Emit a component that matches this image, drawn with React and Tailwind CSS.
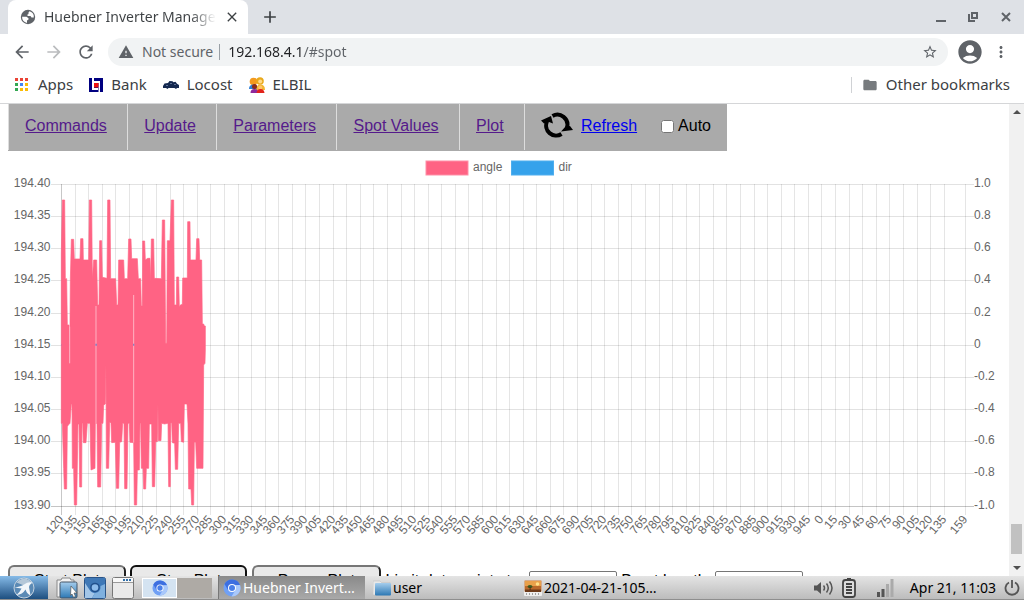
import React, { useState } from "react";
import {
  MdAccountCircle,
  MdAdd,
  MdArrowBack,
  MdArrowForward,
  MdClose,
  MdFolder,
  MdMoreVert,
  MdRefresh,
  MdStarBorder,
  MdWarning,
} from "react-icons/md";

const navLinks = ["Commands", "Update", "Parameters", "Spot Values", "Plot"];

// x axis labels: 120..945, then the counter wraps to 0..135, last sample is 159
const xLabels = [
  ...Array.from({ length: 56 }, (_, i) => 120 + i * 15),
  ...Array.from({ length: 10 }, (_, i) => i * 15),
];
const xTicks = [
  ...xLabels.map((label, i) => ({ label, x: Math.round(61 + i * 13.58) })),
  { label: 159, x: 965 },
];

const yTicks = [
  { y: 184, left: "194.40", right: "1.0" },
  { y: 216, left: "194.35", right: "0.8" },
  { y: 248, left: "194.30", right: "0.6" },
  { y: 280, left: "194.25", right: "0.4" },
  { y: 313, left: "194.20", right: "0.2" },
  { y: 345, left: "194.15", right: "0" },
  { y: 377, left: "194.10", right: "-0.2" },
  { y: 409, left: "194.05", right: "-0.4" },
  { y: 441, left: "194.00", right: "-0.6" },
  { y: 473, left: "193.95", right: "-0.8" },
  { y: 506, left: "193.90", right: "-1.0" },
];

// upper and lower envelope of the angle signal, in thirds of a pixel
const upper =
  "184,250 187,90 194,90 196,326 200,326 202,465 207,465 209,580 211,330 214,208 221,208 223,267 240,267 242,206 249,206 250,270 266,270 268,90 275,90 277,326 281,270 290,270 293,405 297,405 299,212 305,212 307,322 321,325 323,90 330,90 332,326 347,326 350,405 354,405 356,270 371,270 373,326 383,326 386,207 393,207 395,266 412,266 415,326 422,326 424,408 427,408 428,213 434,213 436,270 443,265 450,265 452,335 454,207 461,207 463,325 484,326 487,150 494,150 497,520 500,520 502,212 510,212 514,90 521,90 523,405 529,405 530,321 536,321 538,412 541,405 547,403 548,324 562,324 563,155 570,155 571,270 588,270 590,206 597,206 599,270 605,270 607,462 611,462 613,468 616,468";
const lower =
  "616,540 615,580 611,585 609,895 590,895 587,817 583,817 581,1005 575,1005 573,957 566,957 564,762 561,702 553,702 551,817 544,815 542,760 536,760 533,898 526,898 524,820 517,818 515,758 512,760 511,950 506,950 504,760 494,762 485,760 483,812 475,812 474,702 472,815 467,815 464,950 457,950 455,762 448,762 446,895 439,895 437,957 431,957 429,895 424,895 422,760 420,760 418,900 412,900 410,1005 403,1005 401,818 390,817 388,760 384,760 381,956 374,956 372,760 368,760 365,815 359,817 356,955 349,955 346,817 335,818 333,760 329,756 326,895 319,895 318,585 316,702 311,705 309,760 305,760 302,951 293,951 291,760 286,760 285,895 273,900 270,760 262,760 258,818 250,818 248,760 246,760 245,951 239,951 237,762 234,762 230,1005 223,1005 221,895 217,895 216,702 214,702 210,760 205,765 202,770 200,957 193,957 191,895 187,760 184,760";

const Chart = () => (
  <svg
    viewBox="8 151 993 414"
    className="block w-full"
    fontFamily="Liberation Sans, Arial, sans-serif"
    fontSize="12"
    fill="#666"
  >
    <rect x="426" y="161" width="42" height="14" fill="#ff6384" stroke="#ff8fa7" />
    <text x="473" y="171">
      angle
    </text>
    <rect x="511.5" y="161" width="42" height="14" fill="#36a2eb" stroke="#4faeee" />
    <text x="558.5" y="171">
      dir
    </text>
    {yTicks.map((t) => (
      <g key={t.y}>
        <rect
          x="51"
          y={t.y}
          width="923"
          height="1"
          fill={t.y === 506 ? "#c4c4c4" : "#e2e2e2"}
        />
        <text x="50.5" y={t.y + 3} textAnchor="end">
          {t.left}
        </text>
        <text x="974" y={t.y + 3}>
          {t.right}
        </text>
      </g>
    ))}
    {xTicks.map((t, i) => (
      <g key={i}>
        <rect
          x={t.x}
          y="184"
          width="1"
          height="331"
          fill="#000"
          fillOpacity={i === 0 ? 0.22 : 0.1}
        />
        <text
          transform={`translate(${t.x} 517) rotate(-50)`}
          textAnchor="end"
          y="4"
        >
          {t.label}
        </text>
      </g>
    ))}
    <rect x="61" y="344" width="143" height="2" fill="#36a2eb" />
    <g transform="translate(0 170) scale(0.33333)">
      <polygon
        points={`${upper} ${lower}`}
        fill="#ff6384"
        stroke="#ff6384"
        strokeWidth="2"
        strokeLinejoin="round"
      />
      <path d="M288 408V760M401 375V818M209 470V580" stroke="#ffb3c3" strokeWidth="3" />
      <path d="M286 524h5M399 524h4" stroke="#8b7fc0" strokeWidth="6" />
    </g>
  </svg>
);

const GlobeIcon = () => (
  <svg viewBox="0 0 16 16" className="size-4 shrink-0">
    <circle cx="8" cy="8" r="7.2" fill="#5f6368" />
    <path
      d="M9.500 2.200A6 6 0 0 1 13.800 8.500H11.500L10.500 7H8L7 6l1.500-1V3.500z"
      fill="#fff"
    />
    <path d="M2.100 7.800H6.500l2 1.500v1.200L7 11.500v2.400A6 6 0 0 1 2.100 7.800z" fill="#fff" />
  </svg>
);

const AppsIcon = () => (
  <svg viewBox="0 0 13 13" className="h-[13px] w-[13px]">
    {["#ea4335", "#ea4335", "#ea4335", "#34a853", "#4285f4", "#fbbc05", "#34a853", "#fbbc05", "#fbbc05"].map(
      (color, i) => (
        <rect
          key={i}
          x={(i % 3) * 5}
          y={Math.floor(i / 3) * 5}
          width="3"
          height="3"
          fill={color}
        />
      )
    )}
  </svg>
);

const BankIcon = () => (
  <svg viewBox="0 0 14 14" className="h-[14px] w-[14px]">
    <path d="M0 0h14v14H0z" fill="#000080" />
    <path d="M3 0h2v10h4v2H3zM5 3h6v11H9.500V5H5z" fill="#fff" />
    <path d="M5 5h4.500v4.500H5z" fill="#e11" />
  </svg>
);

const LocostIcon = () => (
  <svg viewBox="0 0 16 16" className="size-4">
    <path
      d="M0 9 1.500 6.500 5 6l1.500-2 3 .2 1 1 2-.500 1.500 2L16 8v3h-2l-1 1-1.500-1H5.500l-1 1L3 11H0z"
      fill="#14284f"
    />
    <path d="M3 8.500h2M7 6.500h2M11 7.500h2" stroke="#8fa3c8" strokeWidth=".6" />
  </svg>
);

const ElbilIcon = () => (
  <svg viewBox="0 0 16 16" className="size-4">
    <circle cx="4.500" cy="4.500" r="3.800" fill="#f39a1e" />
    <path d="M0 12q0-4.500 4.500-4.500t4 4.500z" fill="#2f7fd6" />
    <circle cx="11" cy="4" r="3.800" fill="#e9a91c" />
    <circle cx="11.200" cy="4.600" r="2" fill="#ffd98a" />
    <path d="M7 13q0-5.500 4.500-5.500T16 13z" fill="#f2b632" />
    <circle cx="5.500" cy="9.500" r="2.500" fill="#8b2b1a" />
    <path d="M1.500 16q0-4 4-4t4 4z" fill="#8e2a9c" />
    <circle cx="11.300" cy="10.500" r="2" fill="#ffc46b" />
    <path d="M7.500 16q.500-4 4-4t4 4z" fill="#e2231a" />
  </svg>
);

const RefreshArrows = () => (
  <svg viewBox="0 0 32 26" className="h-[26px] w-8">
    <path
      d="M11.500 4A10 10 0 0 1 26 15.500M20.500 22A10 10 0 0 1 6 9.500"
      fill="none"
      stroke="#000"
      strokeWidth="4"
    />
    <path d="m20 19.500 12-1.500-3-4-4.500.500zM0 8.500l10-4.500 2 7.500-4-1.500-5 1.500z" fill="#000" />
  </svg>
);

const ChromiumIcon = () => (
  <svg viewBox="0 0 18 18" className="h-full w-full">
    <circle cx="9" cy="9" r="8.500" fill="#6fa0f5" />
    <path d="M1.500 5A8.500 8.500 0 0 1 17 6H9L5 11z" fill="#3d6fe0" />
    <path d="M17 6a8.500 8.500 0 0 1-8.500 11.500L12.500 11 12 6z" fill="#a9c8fb" />
    <circle cx="9" cy="9" r="4" fill="#fff" />
    <circle cx="9" cy="9" r="3" fill="#4a7fe8" />
  </svg>
);

const FolderIcon = () => (
  <svg viewBox="0 0 18 16" className="h-4 w-[18px]">
    <path d="M0 1h7l1.500 1.500H17V15H0z" fill="#e8e8e8" stroke="#bbb" strokeWidth=".5" />
    <rect x="2" y="3" width="16" height="12.500" rx="1" fill="url(#folderBlue)" />
  </svg>
);

const PhotoIcon = () => (
  <svg viewBox="0 0 18 16" className="h-4 w-[18px]">
    <rect width="18" height="16" rx="1" fill="#eee" />
    <rect x=".5" y=".5" width="17" height="11" fill="#b9682a" />
    <path d="M1 1h16v5H1z" fill="#e9a04a" />
    <circle cx="13.500" cy="4" r="1.800" fill="#ffe08a" />
    <path d="M1 9.500h16V12H1z" fill="#6d3a1a" />
    <ellipse cx="6" cy="6.500" rx="2.500" ry="1.500" fill="#3b5a20" />
    <path d="M5.700 7h.8v3h-.8z" fill="#3a2412" />
    <path d="M2 14h14" stroke="#888" strokeDasharray="1 2" strokeWidth="1.500" />
  </svg>
);

const Browser = () => (
  <header className="shrink-0 font-['Noto_Sans',sans-serif] text-[#3c4043]">
    <div className="flex h-[34px] items-center bg-[#dee1e6] pl-2">
      <div className="flex h-full w-60 items-center gap-2 rounded-t-lg bg-white pr-2 pl-3">
        <GlobeIcon />
        <span className="flex-1 overflow-hidden bg-[linear-gradient(90deg,#3c4043_85%,transparent)] bg-clip-text text-sm whitespace-nowrap text-transparent">
          Huebner Inverter Management
        </span>
        <button aria-label="Close tab" className="p-0">
          <MdClose className="size-4" />
        </button>
      </div>
      <button aria-label="New tab" className="ml-3">
        <MdAdd className="size-5" />
      </button>
      <div className="ml-auto flex items-center gap-5 pr-3 text-[#5f6368]">
        <button aria-label="Minimize">
          <svg viewBox="0 0 12 12" className="size-3">
            <path d="M0 9h10v2H0z" fill="currentColor" />
          </svg>
        </button>
        <button aria-label="Restore">
          <svg viewBox="0 0 12 12" className="size-3" fill="none" stroke="currentColor" strokeWidth="2">
            <path d="M4 2h5v5H4zM1 3v7h6" />
          </svg>
        </button>
        <button aria-label="Close window">
          <svg viewBox="0 0 12 12" className="size-3" stroke="currentColor" strokeWidth="2">
            <path d="m2 2 8 8M10 2l-8 8" />
          </svg>
        </button>
      </div>
    </div>
    <div className="flex h-9 items-center bg-white pr-3.5 pl-3 text-[#5f6368]">
      <button aria-label="Back" className="mr-3">
        <MdArrowBack className="size-5" />
      </button>
      <button aria-label="Forward" className="mr-3 text-[#babcbe]">
        <MdArrowForward className="size-5" />
      </button>
      <button aria-label="Reload" className="mr-3">
        <MdRefresh className="size-5" />
      </button>
      <div className="flex h-7 flex-1 items-center rounded-full bg-[#f1f3f4] px-2.5 text-sm">
        <MdWarning className="size-4" />
        <span className="ml-2">Not secure</span>
        <span className="mr-2 ml-1.5 h-4 w-px bg-[#9aa0a6]" />
        <input
          aria-label="Address"
          defaultValue="192.168.4.1/#spot"
          className="flex-1 bg-[linear-gradient(90deg,#202124_74px,#5f6368_74px)] bg-clip-text text-transparent outline-none"
        />
        <button aria-label="Bookmark this page">
          <MdStarBorder className="size-4" />
        </button>
      </div>
      <button aria-label="Profile" className="ml-2">
        <MdAccountCircle className="size-7" />
      </button>
      <button aria-label="Menu" className="ml-2">
        <MdMoreVert className="size-[18px]" />
      </button>
    </div>
    <nav className="flex h-[34px] items-center gap-4 border-b border-[#d5d6d8] bg-white pr-3.5 pb-1 pl-[15px] text-[15px]">
      <a href="#apps" className="flex items-center gap-2.5">
        <AppsIcon />
        Apps
      </a>
      <a href="#bank" className="flex items-center gap-2">
        <BankIcon />
        Bank
      </a>
      <a href="#locost" className="flex items-center gap-2">
        <LocostIcon />
        Locost
      </a>
      <a href="#elbil" className="flex items-center gap-2">
        <ElbilIcon />
        ELBIL
      </a>
      <a href="#other" className="ml-auto flex items-center gap-2">
        <span className="mr-0.5 h-4 w-px bg-[#d0d2d5]" />
        <MdFolder className="size-4 text-[#777b7e]" />
        Other bookmarks
      </a>
    </nav>
  </header>
);

const Page = () => {
  const [auto, setAuto] = useState(false);

  return (
    <main className="flex min-h-0 flex-1 bg-white font-['Liberation_Sans',Arial,sans-serif] text-base text-black">
      <div className="min-w-0 flex-1 overflow-hidden px-2">
        <nav className="inline-flex h-[47px] bg-[#aaa] pb-px align-top">
          {navLinks.map((name) => (
            <div key={name} className="border-l border-[#ddd] px-4 pt-2.5">
              <a href="#spot" className="text-[#551a8b] underline">
                {name}
              </a>
              &nbsp;
            </div>
          ))}
          <div className="flex items-start border-l border-[#ddd] px-4">
            <span className="pt-2">
              <RefreshArrows />
            </span>
            <a href="#refresh" className="ml-2 pt-2.5 text-[#0000ee] underline">
              Refresh
            </a>
            <label className="ml-6 flex items-center gap-1 pt-2.5">
              <input
                type="checkbox"
                checked={auto}
                onChange={(e) => setAuto(e.target.checked)}
                className="size-[13px]"
              />
              Auto
            </label>
          </div>
        </nav>
        <Chart />
        <div className="leading-5 whitespace-nowrap">
          <button className="rounded-md border-2 border-[#767676] border-r-[#222] bg-[#e9e9e9] px-6 py-1">
            Start Plot
          </button>{" "}
          <button className="rounded-md border-2 border-[#101010] bg-[#e9e9e9] px-6 py-1">
            Stop Plot
          </button>{" "}
          <button className="rounded-md border-2 border-[#767676] border-r-[#222] bg-[#e9e9e9] px-6 py-1">
            Pause Plot
          </button>{" "}
          <label>
            Limit data points to:{" "}
            <input type="text" className="h-5 w-[88px] rounded-xs border border-[#767676] bg-white" />
          </label>{" "}
          <label>
            Burst length:{" "}
            <input type="text" className="h-5 w-[88px] rounded-xs border border-[#767676] bg-white" />
          </label>
        </div>
      </div>
      <div className="flex w-[15px] shrink-0 flex-col items-center bg-[#f1f1f1] py-1.5">
        <svg viewBox="0 0 8 4" className="h-1 w-2">
          <path d="M0 4 4 0l4 4z" fill="#505050" />
        </svg>
        <div className="mt-auto mb-3 h-[30px] w-[11px] bg-[#c1c1c1]" />
        <svg viewBox="0 0 8 4" className="h-1 w-2">
          <path d="M0 0h8L4 4z" fill="#505050" />
        </svg>
      </div>
    </main>
  );
};

const Taskbar = () => (
  <footer className="flex h-6 shrink-0 items-center border-b border-[#8e8e8e] bg-linear-to-b from-[#e4e4e4] to-[#bcbcbc] font-['Noto_Sans',sans-serif] text-sm text-black">
    <button
      aria-label="Start"
      className="flex h-full w-12 items-center justify-center bg-linear-to-b from-[#86bbe8] to-[#1d4f80]"
    >
      <svg viewBox="0 0 22 22" className="size-[22px]">
        <circle cx="11" cy="11" r="10" fill="#5b8ab5" stroke="#c3d2df" />
        <path d="M3.500 5.500A9.500 9.500 0 0 1 19 6L11 8.500z" fill="#b4c7d8" />
        <path
          d="M1.500 10.500Q8 9.500 11 7.500 15 4.500 19.500 5.500 16.500 7.500 16 10L17.500 18.500Q14 17 12.500 12.500 9.500 17.500 3.500 18 7 15 8.500 11.500z"
          fill="#f2f6fa"
        />
      </svg>
    </button>
    <div className="ml-2 flex gap-1.5">
      <button aria-label="File manager">
        <svg viewBox="0 0 22 22" className="size-[22px]">
          <defs>
            <linearGradient id="folderBlue" x1="0" y1="0" x2="0" y2="1">
              <stop offset="0" stopColor="#a5cdec" />
              <stop offset="1" stopColor="#2c78b4" />
            </linearGradient>
          </defs>
          <path d="M1 3h4l1-2h8l1 2h3v17H1z" fill="#f2f2f2" stroke="#888" />
          <rect x="4" y="5" width="17" height="16" rx="1.500" fill="url(#folderBlue)" stroke="#456" />
          <path d="m15 9 6 7h-3l1.500 3.500-2 .8L16 17l-1.500 1.500z" fill="#fff" stroke="#555" strokeWidth=".7" />
        </svg>
      </button>
      <button aria-label="Web browser">
        <svg viewBox="0 0 22 22" className="size-[22px]">
          <rect x=".5" y=".5" width="21" height="21" rx="2" fill="#3b77b8" stroke="#2a5488" />
          <path d="M1 1h20v5H11Q6 6 5 11L1 6z" fill="#3f78b6" />
          <path d="M1 6l4 6q2 4 6 4l-3 5H1z" fill="#a3c6e8" />
          <path d="M11 16q6-1 5.500-7L21 7v14H8z" fill="#7fb0de" />
          <circle cx="11" cy="10.500" r="4.800" fill="#21508c" />
          <circle cx="11" cy="10.500" r="3.300" fill="#8dbcec" />
        </svg>
      </button>
      <button aria-label="Show desktop">
        <svg viewBox="0 0 22 22" className="size-[22px]">
          <rect x=".5" y=".5" width="21" height="21" rx="2" fill="#eaeaea" stroke="#777" />
          <path d="M1 1h20v4H1z" fill="#f8f8f8" />
          <path d="M11 3h2M14 3h2M17 3h2" stroke="#2f6ea8" strokeWidth="2" />
          <path d="M1 5.500h20" stroke="#999" />
        </svg>
      </button>
    </div>
    <div className="ml-2 flex h-5">
      <button
        aria-label="Desktop 1"
        className="flex w-[35px] items-center justify-center border border-white bg-[#d4e3f1]"
      >
        <span className="size-4">
          <ChromiumIcon />
        </span>
      </button>
      <button aria-label="Desktop 2" className="w-[35px] bg-[#aeaaa5]" />
    </div>
    <div className="ml-1.5 flex h-full gap-1">
      <button className="flex w-[147px] items-center gap-0.5 border-l border-[#777] bg-linear-to-b from-[#8a8a8a] to-[#a9a9a9] pl-1 text-white">
        <span className="size-[18px] shrink-0">
          <ChromiumIcon />
        </span>
        Huebner Invert…
      </button>
      <button className="flex w-[147px] items-center gap-0.5 pl-1">
        <FolderIcon />
        user
      </button>
      <button className="flex w-[147px] items-center gap-0.5 pl-1">
        <PhotoIcon />
        2021-04-21-105…
      </button>
    </div>
    <div className="ml-auto flex items-center pr-1">
      <svg viewBox="0 0 20 16" className="h-4 w-5" fill="none" stroke="#555" strokeWidth="1.500">
        <path d="M0 5.500h3L7 2v12l-4-3.500H0z" fill="#555" stroke="none" />
        <path d="M9.500 5.500q2 2.500 0 5M12.500 3.500q3.500 4.500 0 9M15.500 1.500q5 6.500 0 13" />
      </svg>
      <svg viewBox="0 0 14 20" className="ml-2 h-5 w-3.5">
        <path d="M5 0h4v2H5z" fill="#444" />
        <rect x="1" y="2" width="12" height="17" rx="2.500" fill="#ddd" stroke="#444" strokeWidth="1.800" />
        <path d="M4 6h6M4 9h6M4 12h6M4 15h6" stroke="#444" strokeWidth="2" />
      </svg>
      <svg viewBox="0 0 18 18" className="ml-5 h-[18px] w-[18px]">
        <path d="M1 13h3v5H1zM5.500 10h3v8h-3z" fill="#555" />
        <path d="M10 5h3v13h-3zM14.500 0h3v18h-3z" fill="#aaa" />
      </svg>
      <span className="ml-4">Apr 21, 11:03</span>
      <button aria-label="Power" className="ml-2">
        <svg viewBox="0 0 16 16" className="size-4" fill="none" stroke="#555" strokeWidth="1.800">
          <path d="M5 2.500a6.500 6.500 0 1 0 6 0M8 0v8" />
        </svg>
      </button>
    </div>
  </footer>
);

const App = () => (
  <div className="flex h-screen flex-col overflow-hidden">
    <Browser />
    <Page />
    <Taskbar />
  </div>
);

export default App;
